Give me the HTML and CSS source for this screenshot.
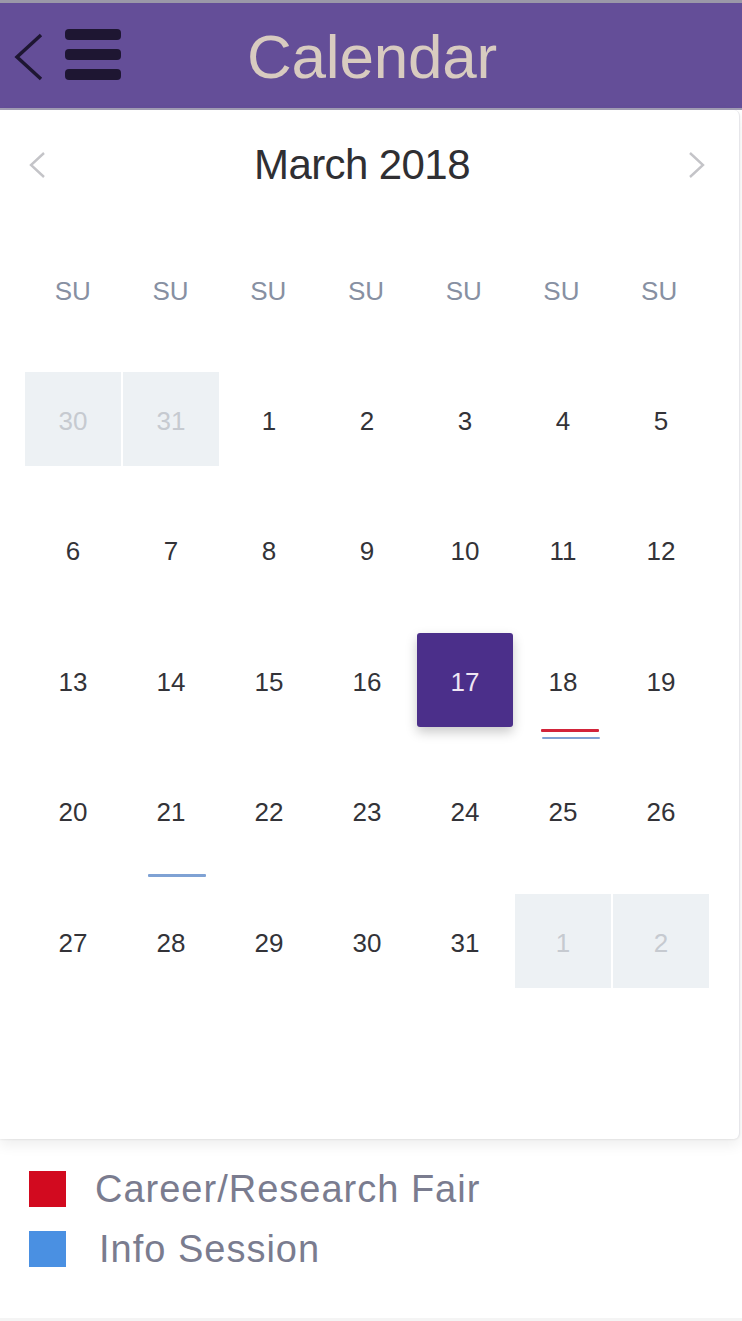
FILE: index.html
```html
<!DOCTYPE html>
<html>
<head>
<meta charset="utf-8">
<link rel="stylesheet" href="styles.css">
</head>
<body>
<header class="topbar">
  <div class="topbar-icons">
    <svg class="back" width="30" height="50" viewBox="0 0 30 50"><polyline points="27,3 3,25 27,47" fill="none" stroke="#1e1632" stroke-width="3.5" stroke-linejoin="miter"/></svg>
    <svg class="burger" width="56" height="52" viewBox="0 0 56 52"><rect x="0" y="0" width="56" height="11" rx="4" fill="#1e1632"/><rect x="0" y="20" width="56" height="11" rx="4" fill="#1e1632"/><rect x="0" y="40" width="56" height="11" rx="4" fill="#1e1632"/></svg>
  </div>
  <h1 class="title">Calendar</h1>
</header>
<main class="card">
  <div class="month-nav">
    <svg class="chev" width="20" height="28" viewBox="0 0 20 28"><polyline points="17,2 4,14 17,26" fill="none" stroke="#c4c4c8" stroke-width="2.4"/></svg>
    <div class="month">March 2018</div>
    <svg class="chev" width="20" height="28" viewBox="0 0 20 28"><polyline points="3,2 16,14 3,26" fill="none" stroke="#c4c4c8" stroke-width="2.4"/></svg>
  </div>
  <div class="weekdays">
    <span>SU</span><span>SU</span><span>SU</span><span>SU</span><span>SU</span><span>SU</span><span>SU</span>
  </div>
  <div class="days">
    <div class="day other">30</div><div class="day other">31</div><div class="day">1</div><div class="day">2</div><div class="day">3</div><div class="day">4</div><div class="day">5</div>
    <div class="day">6</div><div class="day">7</div><div class="day">8</div><div class="day">9</div><div class="day">10</div><div class="day">11</div><div class="day">12</div>
    <div class="day">13</div><div class="day">14</div><div class="day">15</div><div class="day">16</div><div class="day selected">17</div><div class="day">18<span class="mark red m18a"></span><span class="mark blue m18b"></span></div><div class="day">19</div>
    <div class="day">20</div><div class="day">21<span class="mark blue m21"></span></div><div class="day">22</div><div class="day">23</div><div class="day">24</div><div class="day">25</div><div class="day">26</div>
    <div class="day">27</div><div class="day">28</div><div class="day">29</div><div class="day">30</div><div class="day">31</div><div class="day other">1</div><div class="day other">2</div>
  </div>
</main>
<section class="legend">
  <div class="legend-item"><span class="swatch sw-red"></span><span class="legend-text">Career/Research Fair</span></div>
  <div class="legend-item"><span class="swatch sw-blue"></span><span class="legend-text info">Info Session</span></div>
</section>
</body>
</html>
```
FILE: styles.css
```css
* { box-sizing: border-box; }
html, body { margin: 0; padding: 0; }
body {
  width: 742px;
  height: 1321px;
  overflow: hidden;
  background: #ffffff;
  font-family: "Liberation Sans", Arial, sans-serif;
  border-bottom: 3px solid #f4f4f4;
}
.topbar {
  height: 110px;
  background: #644e98;
  border-top: 3px solid #9b98a8;
  border-bottom: 2px solid #a29db4;
  display: flex;
  align-items: center;
}
.topbar-icons {
  display: flex;
  align-items: center;
  padding-left: 14px;
  gap: 21px;
  margin-top: 2px;
}
.back { display: block; }
.burger { display: block; margin-top: -4px; }
.title {
  margin: 2px 0 0 126px;
  font-family: "Liberation Sans", Arial, sans-serif;
  font-weight: 400;
  font-size: 62px;
  color: #d8cbc0;
  letter-spacing: -0.2px;
  line-height: 1;
}
.card {
  background: #ffffff;
  width: 740px;
  height: 1029px;
  border-radius: 0 6px 6px 0;
  border-right: 1px solid #e6e6ea;
  box-shadow: 0 6px 14px rgba(0,0,0,0.07), 0 1px 2px rgba(0,0,0,0.06);
  position: relative;
  z-index: 1;
}
.month-nav {
  height: 110px;
  display: flex;
  align-items: center;
  justify-content: space-between;
  padding: 0 32px 0 27px;
}
.month {
  font-size: 42px;
  color: #2f2f33;
  letter-spacing: -0.6px;
  margin-left: -10px;
}
.weekdays {
  margin-top: 47px;
  display: grid;
  grid-template-columns: repeat(7, 1fr);
  gap: 2px;
  padding: 0 32px 0 25px;
  height: 48px;
  align-items: center;
}
.weekdays span {
  text-align: center;
  font-size: 26px;
  color: #8790a2;
}
.days {
  margin-top: 57px;
  display: grid;
  grid-template-columns: repeat(7, 1fr);
  grid-auto-rows: 94px;
  column-gap: 2px;
  row-gap: 36.5px;
  padding: 0 30px 0 25px;
}
.day {
  position: relative;
  display: flex;
  align-items: center;
  justify-content: center;
  font-size: 26px;
  color: #333338;
  padding-top: 4px;
}
.day.other {
  background: #edf1f4;
  color: #c6cad0;
}
.day.selected {
  background: #4b2f8a;
  color: #efe6f4;
  border-radius: 3px;
  box-shadow: 0 5px 12px rgba(0,0,0,0.22);
}
.mark {
  position: absolute;
  height: 3px;
  border-radius: 1px;
}
.mark.red { background: #d2243a; }
.mark.blue { background: #7fa2d4; }
.m18a { width: 58px; left: 26px; top: 96px; }
.m18b { width: 58px; left: 27px; top: 104px; height: 2px; }
.m21 { width: 58px; left: 25px; top: 110px; }
.legend {
  padding-top: 32px;
  padding-left: 29px;
  display: flex;
  flex-direction: column;
  gap: 24px;
}
.legend-item {
  display: flex;
  align-items: center;
  height: 36px;
}
.swatch {
  width: 37px;
  height: 36px;
  display: block;
}
.sw-red { background: #d20a1f; }
.sw-blue { background: #4a90e2; }
.legend-text {
  margin-left: 29px;
  font-size: 38px;
  color: #7a7c8f;
  letter-spacing: 1px;
}
.legend-text.info { margin-left: 33px; }
```
